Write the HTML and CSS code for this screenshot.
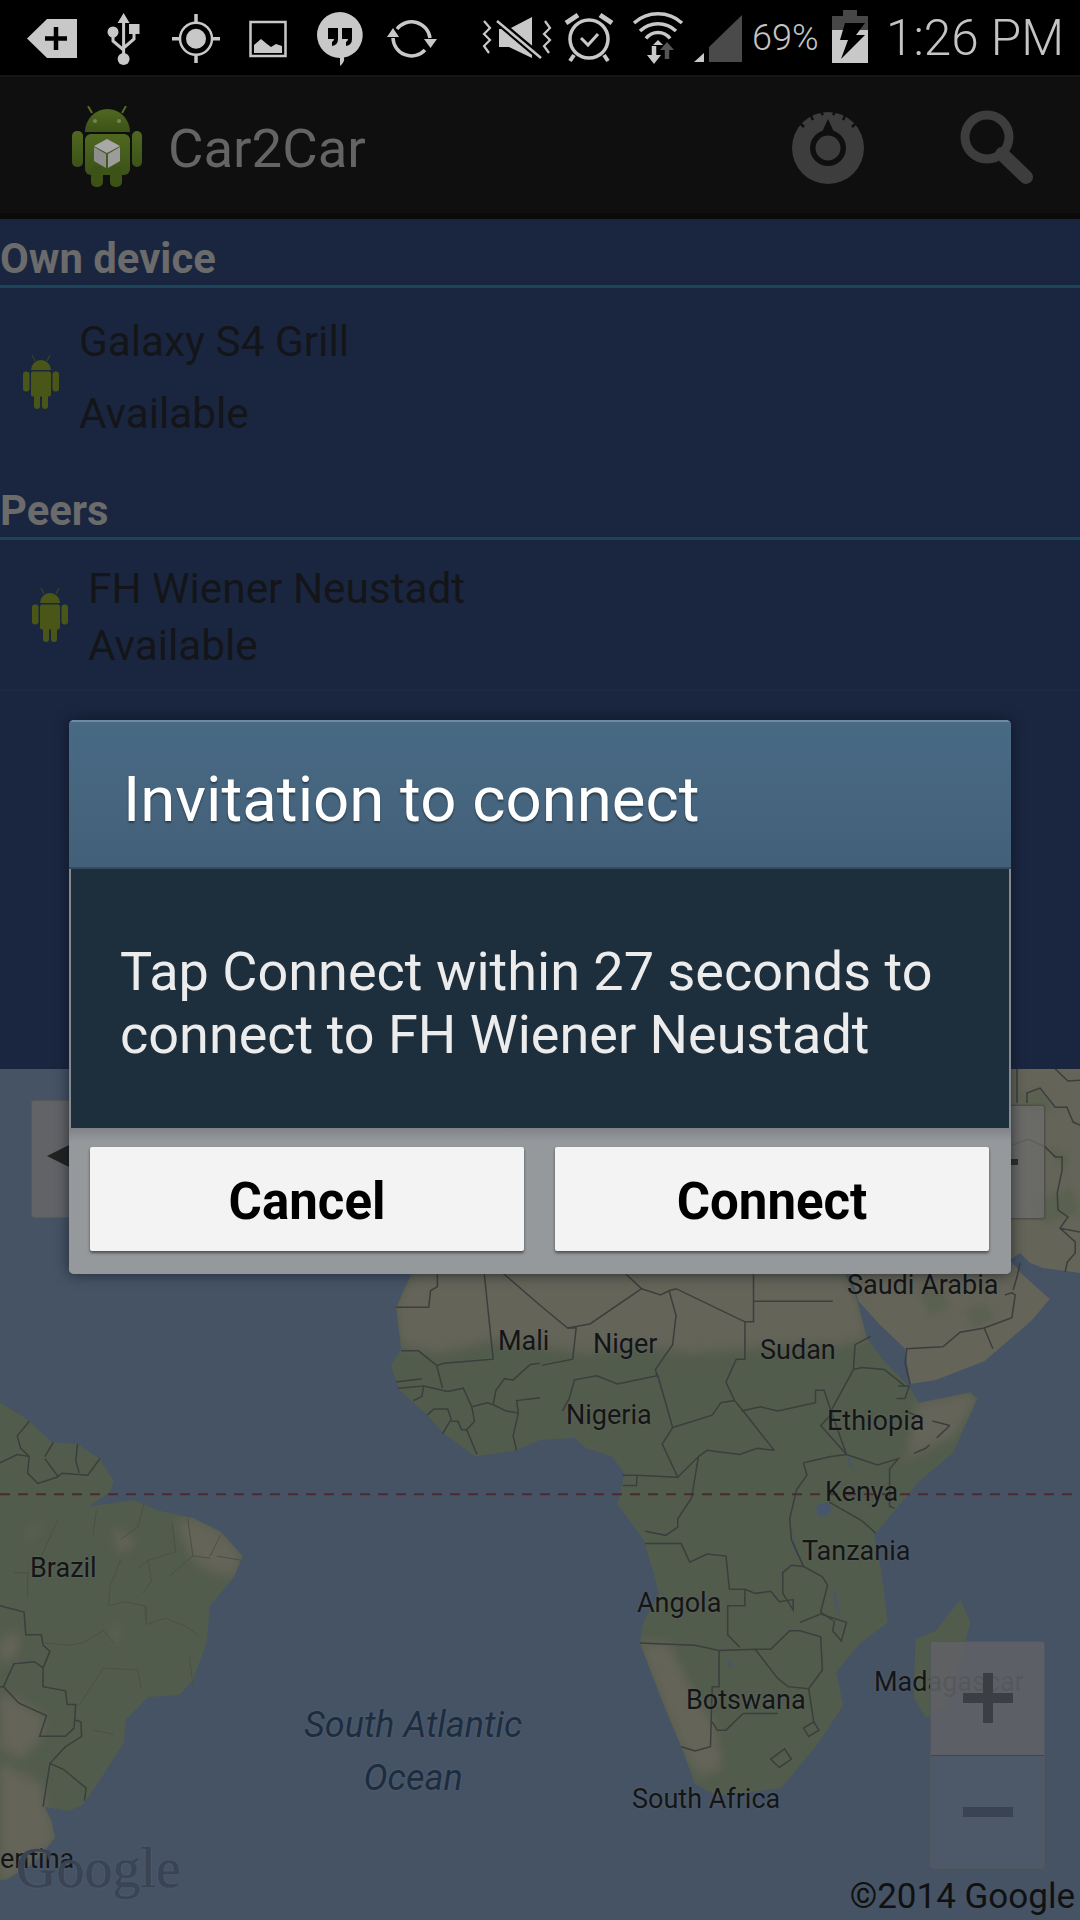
FILE: index.html
```html
<!DOCTYPE html>
<html>
<head>
    <meta charset="utf-8">
    <meta name="viewport" content="width=device-width, initial-scale=1">
    <title>Car2Car</title>
    <link rel="stylesheet" href="styles.css">
</head>
<body>
<div class="phone">
    <svg class="defs" width="0" height="0">
        <symbol id="droid" viewBox="0 0 36 56">
            <path d="M8 17a10 10 0 0 1 20 0z"/>
            <path d="M12 8L9 2M24 8l3-6" stroke="#3f4c18" stroke-width="1"/>
            <rect x="8" y="18.500" width="20" height="25" rx="2"/>
            <rect x="0" y="18.500" width="6.500" height="20" rx="3"/>
            <rect x="29.500" y="18.500" width="6.500" height="20" rx="3"/>
            <rect x="11" y="40" width="6" height="16" rx="3"/>
            <rect x="19" y="40" width="6" height="16" rx="3"/>
        </symbol>
    </svg>

    <div class="status">
        <svg class="notify" width="745" height="75" viewBox="0 0 745 75">
            <!-- add tag -->
            <path class="i" d="M27 38.500L47 19h30v39H47z"/>
            <path d="M45 38.500h22M56 27v23" stroke="#000" stroke-width="4.500" fill="none"/>
            <!-- usb -->
            <path class="i" d="M123.600 13l6 10h-12z"/>
            <path d="M123.600 20v38M113 34v7l10.600 9M134 32v7l-10.400 9" stroke="#c8c8c8" stroke-width="3" fill="none"/>
            <circle class="i" cx="123.600" cy="59" r="6"/>
            <circle class="i" cx="113" cy="32" r="5.500"/>
            <rect class="i" x="129" y="24" width="10.500" height="10"/>
            <!-- location -->
            <circle cx="196" cy="38.700" r="16" fill="none" stroke="#c8c8c8" stroke-width="2.500"/>
            <circle class="i" cx="196" cy="38.700" r="10"/>
            <path d="M196 14v9M196 54v9M172 38.700h9M211 38.700h9" stroke="#c8c8c8" stroke-width="3.500"/>
            <!-- picture -->
            <rect x="250.500" y="22" width="35" height="34" fill="none" stroke="#c8c8c8" stroke-width="2.500"/>
            <path class="i" d="M254 53V45l7-6 6 5 4 3 5-3 6 2v7z"/>
            <!-- hangouts -->
            <path class="i" d="M340 12a23 23 0 0 1 4 45.600Q345 62 340 66V58a23 23 0 0 1 0-46z"/>
            <path d="M328 28h10v11q0 6-6 7v-4q2-1 2-3h-6zM342 28h10v11q0 6-6 7v-4q2-1 2-3h-6z" fill="#000"/>
            <!-- sync -->
            <path d="M397 29A18.500 18.500 0 0 1 430 38M425 50A18.500 18.500 0 0 1 393 38" fill="none" stroke="#c8c8c8" stroke-width="3.500"/>
            <path class="i" d="M387 37h12l-6-9zM424 39h13l-6.500 9z"/>
            <!-- silent vibrate -->
            <path d="M484 21l6 7-6 6 6 6-6 6 5 7M545 21l5 7-6 6 6 6-6 6 5 7" fill="none" stroke="#c8c8c8" stroke-width="2.200"/>
            <path class="i" d="M499 29v18h10l23 11V17l-23 12z"/>
            <path d="M496 20l44 37" stroke="#000" stroke-width="7"/>
            <path d="M497 21l44 37" stroke="#c8c8c8" stroke-width="2.500"/>
            <!-- alarm -->
            <circle cx="589" cy="39" r="19" fill="none" stroke="#c8c8c8" stroke-width="3.500"/>
            <path d="M581 38l7 7 10-11" fill="none" stroke="#c8c8c8" stroke-width="3"/>
            <path d="M566 23l12-8M612 23l-12-8" stroke="#c8c8c8" stroke-width="5"/>
            <path d="M574 55l-4 6M604 55l4 6" stroke="#c8c8c8" stroke-width="4"/>
            <!-- wifi -->
            <path d="M634 23a36 36 0 0 1 48 0M640 31a26 26 0 0 1 36 0M646 38.500a15 15 0 0 1 24 0" fill="none" stroke="#c8c8c8" stroke-width="3.500"/>
            <path class="i" d="M658 40l-5 5h10z"/>
            <path d="M667 59V47" stroke="#555" stroke-width="4.500"/>
            <path d="M660 50l7-8 7 8z" fill="#555"/>
            <path d="M654 46v10" stroke="#c8c8c8" stroke-width="4.500"/>
            <path class="i" d="M647 55h14l-7 9z"/>
            <!-- signal -->
            <path d="M709 62V47l33-32v47z" fill="#4a4a4a"/>
            <path class="i" d="M694 62l10-9v9z"/>
        </svg>
        <span class="pct">69%</span>
        <svg class="batt" width="36" height="53" viewBox="0 0 36 53">
            <path d="M11 0h14v6h11v15H0V6h11z" fill="#474747"/>
            <rect y="20" width="36" height="33" fill="#c8c8c8"/>
            <path d="M13 13h20l-9 12h9L9 49l7-19H8z" fill="#000"/>
        </svg>
        <span class="clock">1:26 PM</span>
    </div>

    <div class="appbar">
        <svg class="logo" width="70" height="81" viewBox="0 0 70 81">
            <defs>
                <linearGradient id="leaf" x1="0" y1="0" x2="0" y2="1">
                    <stop offset="0" stop-color="#4f6820"/>
                    <stop offset="1" stop-color="#3c5217"/>
                </linearGradient>
            </defs>
            <path d="M20 7L16 0M50 7l4-7" stroke="#55692b" stroke-width="2"/>
            <path d="M13 26a22.500 23 0 0 1 45 0z" fill="url(#leaf)"/>
            <circle cx="23" cy="15" r="2" fill="#74835a"/>
            <circle cx="47" cy="15" r="2" fill="#74835a"/>
            <rect x="13" y="28" width="45" height="41" rx="6" fill="url(#leaf)"/>
            <rect x="0" y="25" width="11" height="36" rx="5" fill="url(#leaf)"/>
            <rect x="60" y="25" width="10" height="36" rx="5" fill="url(#leaf)"/>
            <rect x="19" y="60" width="12" height="21" rx="5" fill="#3c5217"/>
            <rect x="38" y="60" width="12" height="21" rx="5" fill="#3c5217"/>
            <path d="M35 33l13 7-13 7-13-7z" fill="#a8a8a8"/>
            <path d="M22 41l12 7v14l-12-7z" fill="#8e8e8e"/>
            <path d="M48 41l-12 7v14l12-7z" fill="#9c9c9c"/>
        </svg>
        <span class="app-title">Car2Car</span>
        <svg class="action gear" width="74" height="74" viewBox="0 0 74 74">
            <circle cx="37" cy="38" r="36" fill="#3d3d3d"/>
            <path d="M30 2l2 3M44 2l-2 3M20 6l2 4M54 6l-2 4M10 14l3 3M64 14l-3 3" stroke="#0f0f0f" stroke-width="2.500"/>
            <circle cx="37" cy="38" r="18" fill="#0f0f0f"/>
            <path d="M37 9l6 13H31z" fill="#0f0f0f"/>
            <circle cx="37" cy="38" r="12.500" fill="#3d3d3d"/>
        </svg>
        <svg class="action search" width="74" height="76" viewBox="0 0 74 76">
            <circle cx="27" cy="27" r="22" fill="none" stroke="#3d3d3d" stroke-width="9"/>
            <path d="M42 44l24 23" stroke="#3d3d3d" stroke-width="14" stroke-linecap="round"/>
        </svg>
    </div>

    <div class="lists">
        <div class="group-head group-own">Own device</div>
        <div class="peer peer-own">
            <svg class="droid"><use href="#droid"/></svg>
            <div class="peer-text">
                <div>Galaxy S4 Grill</div>
                <div>Available</div>
            </div>
        </div>
        <div class="group-head">Peers</div>
        <div class="peer peer-far">
            <svg class="droid"><use href="#droid"/></svg>
            <div class="peer-text">
                <div>FH Wiener Neustadt</div>
                <div>Available</div>
            </div>
        </div>
    </div>

    <div class="map">
        <svg class="land" viewBox="0 -485 3136 2053" preserveAspectRatio="none">
            <defs>
                <path id="south-am" d="M0 320L60 350 85 365 150 415 225 420 290 455 330 510 320 535 260 570 390 555 460 580 560 598 640 630 705 690 680 740 610 810 600 900 560 990 520 1025 430 1030 365 1085 360 1140 290 1230 240 1290 200 1305 130 1295 150 1330 160 1370 100 1430 20 1470 0 1472z"/>
                <path id="africa" d="M1200 0L1150 90 1165 190 1135 230 1160 290 1240 350 1290 395 1380 450 1500 435 1568 410 1668 405 1703 430 1778 450 1813 490 1793 565 1868 650 1898 730 1913 780 1868 850 1858 900 1918 1030 1978 1150 2018 1240 2088 1270 2268 1250 2378 1140 2448 1050 2428 970 2498 900 2578 850 2558 720 2538 640 2668 510 2768 440 2838 310 2818 295 2668 320 2638 280 2568 220 2518 165 2488 70 2448 0z"/>
                <path id="arabia" d="M2468 0L2493 75 2553 130 2628 190 2643 275 2718 265 2858 220 2998 120 3048 70 2968 10 2933 -24 2904 -24 2904 0z"/>
                <path id="iran" d="M2904 -485H3136V7L3029 -5 2991 -17 2962 -41 2933 -24H2904z"/>
                <clipPath id="coast">
                    <use href="#south-am"/>
                    <use href="#africa"/>
                    <use href="#arabia"/>
                    <use href="#iran"/>
                </clipPath>
            </defs>
            <use class="green" href="#south-am"/>
            <use class="green" href="#africa"/>
            <use class="tan-flat" href="#arabia"/>
            <use class="tan-flat" href="#iran"/>
            <path class="green" d="M2788 795L2818 850 2793 930 2748 1050 2688 1080 2653 1030 2658 890 2718 870z"/>

            <g clip-path="url(#coast)">
                <g class="sand">
                    <path d="M510 610L560 598 640 630 705 690 680 740 620 730 560 700z"/>
                    <path d="M0 1190L120 1240 130 1295 150 1330 160 1370 100 1430 20 1470 0 1472z"/>
                    <path d="M60 1040L130 1080 120 1130 60 1180 0 1150 0 1020z"/>
                    <path d="M60 650L130 600 100 640zM320 880L350 850 340 900zM330 620L400 660 340 680zM0 890L60 870 50 930 0 950z"/>
                    <path d="M1200 0L1150 90 1165 180 1270 200 1430 170 1560 180 1700 200 1850 180 2000 200 2160 190 2300 180 2440 180 2518 165 2488 70 2448 0z"/>
                    <path d="M2600 470L2668 440 2770 400 2838 310 2818 295 2668 320 2650 350 2640 440z"/>
                    <path d="M1858 900L1918 1030 1978 1150 2030 1220 2100 1200 2070 1090 2000 1000 1940 900z"/>
                </g>
                <g class="moss">
                    <path d="M2960 -420l60 -20 40 50 -60 10zM3040 -300l70 30 -20 30zM2990 -160l120 -40 26 60 -100 30z"/>
                    <path d="M2660 40l60 -10 40 60 -60 20zM2800 100l60 -20 30 40 -60 20z"/>
                </g>
            </g>
            <path class="lake" d="M2370 570q20-10 40-6 8 18-10 30h-26zM2460 440l14 34 10 10-20-14zM2420 760l14 50 8 30-18-30z"/>
            <path class="lake" d="M2300 620l12 50 20 40-24-30zM2110 940l20 10-10 10zM1900 240l20 20-14 0z"/>

            <g class="border">
                <path d="M1150 90H1245L1250 50 1270 40V0M1405 0L1432 215 1290 225 1268 230 1215 195 1165 195M1450 0L1568 85 1648 140 1713 130 1863 45 1818 10M1268 230L1285 285M1150 270L1225 262M1155 285L1230 280 1225 305 1200 315M1230 280L1300 293 1345 285 1370 330 1378 365 1355 385 1385 445M1240 350L1260 335 1300 335 1310 360 1285 395M1310 365H1330L1340 385H1355M1370 330L1415 320 1432 325 1470 340 1505 345 1490 400 1500 435M1432 325L1440 290 1465 262 1490 265 1540 228 1568 225M1505 345L1500 315 1568 308"/>
                <path d="M1648 140H1673L1663 215 1573 230M1863 45L1918 60 1943 50 1963 45 2163 125H2188V10M2188 75H2418M1943 50L1963 110 1953 180 1903 240 1908 255 1793 275 1733 255 1668 265 1653 310 1633 340M2163 125V215H2138L2108 270 2133 315 2093 320 2068 350 1953 380 1933 320 1908 250M1953 380L1923 420 1968 500 2028 450 2008 550 1968 600V620L1933 640 1873 630M2133 315L2158 340 2248 435M2153 340L2208 330 2258 340 2368 320V290H2393L2413 340 2458 445M1968 500L1848 495H1808M1808 520H1848L1850 495M2413 340L2478 240 2483 180 2528 160M2478 240L2503 235 2568 240 2628 280M2458 445L2548 470 2608 455 2583 480V570L2598 575M2248 435L2198 430 2148 445 2053 435 2028 450M2333 465L2413 450 2458 445M2333 465L2343 495 2313 530 2303 565 2293 600 2298 650 2333 715 2388 740 2403 760 2383 825 2418 845M2408 560L2503 605 2543 635"/>
                <path d="M1873 660H1978L2003 705 2053 685 2108 690 2118 770H2163V810H2113V880L2148 910M2163 770L2193 780 2238 775 2263 800 2303 795V820L2273 780V730L2298 712 2333 715M1858 900L2018 905 2088 918 2193 915 2238 915 2293 870H2323L2383 885 2388 965 2348 1010 2288 1005 2258 985 2193 915M2323 850L2383 830 2458 850 2443 895 2418 870 2423 845M2088 918V1005H2068L2063 1150 2018 1160 1978 1150M2068 1090L2083 1110H2108L2158 1070H2258M2348 1010L2363 1090 2378 1110 2348 1125 2333 1105 2363 1090M2238 1180L2278 1155 2298 1180 2263 1200z"/>
                <path d="M2630 190L2738 185 2788 150 2858 140 2938 115 2948 60 2938 55 2918 60M2858 140L2883 190M2633 190L2628 225 2643 275M2608 280H2640L2628 310H2603M2418 345L2383 375 2458 445"/>
                <path stroke-dasharray="18 10" d="M2758 375L2688 360 2628 340M2758 375L2688 430 2633 450"/>
                <path d="M0 465L50 445 85 450 80 490 110 515 165 500 180 490 255 495 290 455M85 365L50 400 60 430 85 450M130 450L155 415M130 455L170 500M225 420L220 460 230 490M0 810L70 825 75 880H120L125 905 145 920 125 960V1005L190 1015 195 1048H220L215 1105 190 1125H115L135 1075 55 1045 10 1005 40 950 100 945 125 960M215 1085L235 1090 237 1125 190 1150 145 1190 125 1295M145 1190L185 1205 250 1250 245 1280M0 1005H10"/>
                <path d="M2953 -485V-403M3064 -485L3101 -456 3136 -458M2982 -403V-427L3020 -439 3064 -393H3098L3116 -357 3136 -350M2939 -301L2985 -316 3035 -297 3064 -273H3084V-241L3070 -186 3072 -145 3101 -128 3078 -101 3136 -92M3078 -101L3122 -68V-41L3099 -19 3093 5M2962 -17L2953 17 2942 48"/>
            </g>
            <g class="state">
                <path d="M170 600L120 690M280 580L270 640M420 560L400 620 350 650M500 610L510 680 430 700 400 720M545 600L560 690 610 695M640 640L610 690M700 700L630 690M560 690L490 740M430 700L440 750 415 780M350 700L320 760 315 810M320 810L360 800 420 810 425 855 480 840 540 860 575 880M425 810V855M240 900L300 870 330 900M300 960L400 965 410 1010M230 1050L300 960M130 900L200 905 240 900M40 730H80V790M560 1000L550 930M270 1110L330 1120"/>
            </g>
            <path class="equator" d="M0 541H3136"/>
        </svg>

        <span class="ctrl ctrl-nav"><i class="nav-arrow"></i></span>
        <span class="ctrl ctrl-tools"><i class="tool-dash"></i></span>

        <span class="place p-saudi">Saudi Arabia</span>
        <span class="place p-mali">Mali</span>
        <span class="place p-niger">Niger</span>
        <span class="place p-sudan">Sudan</span>
        <span class="place p-nigeria">Nigeria</span>
        <span class="place p-ethiopia">Ethiopia</span>
        <span class="place p-kenya">Kenya</span>
        <span class="place p-tanzania">Tanzania</span>
        <span class="place p-angola">Angola</span>
        <span class="place p-botswana">Botswana</span>
        <span class="place p-madagascar">Madagascar</span>
        <span class="place p-safrica">South Africa</span>
        <span class="place p-brazil">Brazil</span>
        <span class="place p-argentina">entina</span>
        <span class="sea p-atlantic">South Atlantic<br>Ocean</span>
        <span class="wordmark">Google</span>
        <span class="copyright">©2014 Google</span>

        <div class="zoomer">
            <div class="zoom-btn zoom-in"><i class="bar-h"></i><i class="bar-v"></i></div>
            <div class="zoom-btn zoom-out"><i class="bar-h"></i></div>
        </div>
    </div>

    <div class="dialog">
        <div class="dialog-title">Invitation to connect</div>
        <div class="dialog-body">Tap Connect within 27 seconds to connect to FH Wiener Neustadt</div>
        <div class="dialog-foot">
            <button class="btn">Cancel</button>
            <button class="btn">Connect</button>
        </div>
    </div>
</div>
</body>
</html>
```

FILE: styles.css
```css
html, body {
  margin: 0;
  padding: 0;
  background: #000;
}
body {
  font-family: Roboto, "Liberation Sans", sans-serif;
}
.phone {
  position: relative;
  width: 1080px;
  height: 1920px;
  overflow: hidden;
  display: flex;
  flex-direction: column;
}
.defs {
  position: absolute;
}

/* status bar */
.status {
  flex: 0 0 75px;
  display: flex;
  align-items: center;
  background: #000;
  color: #c4c4c4;
  font-weight: 300;
}
.notify {
  flex: none;
}
.i {
  fill: #c8c8c8;
}
.pct {
  font-size: 36px;
  margin-left: 7px;
  width: 80px;
}
.batt {
  flex: none;
  margin-top: -2px;
}
.clock {
  font-size: 49.500px;
  margin-left: 18px;
  white-space: nowrap;
}

/* action bar */
.appbar {
  flex: 0 0 138px;
  display: flex;
  align-items: center;
  background: #0f0f0f;
  border-top: 2px solid #161616;
  box-sizing: border-box;
  padding: 6px 0 0 72px;
}
.logo {
  flex: none;
  margin-top: -4px;
}
.app-title {
  margin-left: 26px;
  font-size: 54.500px;
  color: #646464;
  width: 623px;
}
.action {
  flex: none;
}
.gear {
  margin-right: 95px;
  margin-top: -2px;
}

/* peer lists */
.lists {
  flex: 0 0 856px;
  background: #1a2640;
  border-top: 6px solid #0a0a0a;
  box-sizing: border-box;
}
.group-head {
  height: 66px;
  box-sizing: border-box;
  border-bottom: 3px solid #1b4559;
  padding-top: 6px;
  font-size: 41.800px;
  font-weight: 700;
  line-height: 62px;
  color: #6b6b6b;
}
.group-own {
  height: 69px;
  padding-top: 8px;
  line-height: 64px;
}
.peer {
  display: flex;
  align-items: center;
  color: #141518;
  font-size: 42.300px;
}
.peer-own {
  height: 186px;
  padding-left: 23px;
}
.peer-own .peer-text {
  line-height: 72px;
  margin-bottom: 6px;
}
.peer-far {
  height: 150px;
  padding-left: 32px;
  border-bottom: 1px solid #1c2a44;
}
.peer-far .peer-text {
  line-height: 57px;
  margin-top: 3px;
}
.peer-far .droid {
  margin-top: -2px;
}
.droid {
  flex: none;
  width: 36px;
  height: 56px;
  fill: #4a5618;
  margin-right: 20px;
}

/* map */
.map {
  position: relative;
  flex: 1;
  background: #455365;
  overflow: hidden;
}
.land {
  position: absolute;
  left: 0;
  top: 0;
  width: 1080px;
  height: 851px;
}
.green {
  fill: #525c4c;
}
.tan-flat {
  fill: #656459;
}
.sand {
  fill: #656459;
  filter: blur(14px);
}
.moss {
  fill: #5a6150;
  filter: blur(8px);
}
.lake {
  fill: #47566c;
}
.border path {
  fill: none;
  stroke: #3b3e3c;
  stroke-width: 1.500px;
  vector-effect: non-scaling-stroke;
}
.state path {
  fill: none;
  stroke: #4a5046;
  stroke-width: 1px;
  vector-effect: non-scaling-stroke;
}
.equator {
  stroke: #4d2a30;
  stroke-width: 2px;
  stroke-dasharray: 10 8;
  vector-effect: non-scaling-stroke;
}
.place {
  position: absolute;
  font-size: 27px;
  line-height: 32px;
  color: #141517;
  white-space: nowrap;
  text-shadow: 0 0 3px rgba(112, 112, 112, 0.55);
  transform: translateY(-50%);
}
.p-saudi { left: 847px; top: 216px; }
.p-mali { left: 498px; top: 272px; }
.p-niger { left: 593px; top: 275px; }
.p-sudan { left: 760px; top: 281px; }
.p-nigeria { left: 566px; top: 346px; }
.p-ethiopia { left: 827px; top: 352px; }
.p-kenya { left: 825px; top: 423px; }
.p-tanzania { left: 802px; top: 482px; }
.p-angola { left: 637px; top: 534px; }
.p-botswana { left: 686px; top: 631px; }
.p-madagascar { left: 874px; top: 613px; }
.p-safrica { left: 632px; top: 730px; }
.p-brazil { left: 30px; top: 499px; }
.p-argentina { left: 0; top: 790px; }
.sea {
  position: absolute;
  text-align: center;
  font-style: italic;
  font-size: 36px;
  line-height: 53px;
  color: #1e2c40;
  text-shadow: 0 0 3px rgba(100, 112, 128, 0.6);
}
.p-atlantic {
  left: 304px;
  top: 630px;
}
.wordmark {
  position: absolute;
  left: 16px;
  top: 766px;
  font-family: "Liberation Serif", serif;
  font-size: 56px;
  line-height: 66px;
  color: #3a4453;
  -webkit-text-stroke: 0.6px #3a4453;
  text-shadow: 0 0 2px rgba(116, 126, 140, 0.7);
}
.copyright {
  position: absolute;
  right: 5px;
  top: 808px;
  font-size: 35px;
  line-height: 40px;
  color: #111;
  white-space: nowrap;
}
.ctrl {
  position: absolute;
  box-sizing: border-box;
  border: 1px solid #55585c;
  border-radius: 3px;
}
.ctrl-nav {
  left: 31px;
  top: 31px;
  width: 120px;
  height: 118px;
  background: #616367;
}
.nav-arrow {
  position: absolute;
  left: 15px;
  top: 43px;
  border: 12px solid transparent;
  border-right: 24px solid #222;
  border-left: 0;
}
.ctrl-tools {
  left: 930px;
  top: 36px;
  width: 115px;
  height: 114px;
  background: rgba(108, 108, 108, 0.72);
  border-color: #4e4f4b;
  box-shadow: 0 0 2px rgba(50, 50, 45, 0.6);
}
.tool-dash {
  position: absolute;
  left: 80px;
  top: 53px;
  width: 7px;
  height: 6px;
  background: #2e2e2e;
}
.zoomer {
  position: absolute;
  left: 930px;
  top: 572px;
  width: 115px;
  height: 228px;
  box-sizing: border-box;
  border: 1px solid #52565d;
  border-radius: 3px;
  display: flex;
  flex-direction: column;
}
.zoom-btn {
  position: relative;
  flex: 1;
  display: flex;
  align-items: center;
  justify-content: center;
}
.zoom-in {
  background: rgba(96, 97, 101, 0.88);
  border-bottom: 1px solid #3f4650;
}
.zoom-out {
  background: rgba(84, 94, 108, 0.6);
}
.bar-h {
  display: block;
  width: 50px;
  height: 10px;
  background: #3b3e42;
}
.zoom-out .bar-h {
  background: #3a4352;
}
.bar-v {
  position: absolute;
  width: 10px;
  height: 50px;
  background: #3b3e42;
}

/* dialog */
.dialog {
  position: absolute;
  left: 69px;
  top: 720px;
  width: 942px;
  height: 554px;
  border-radius: 5px;
  display: flex;
  flex-direction: column;
  overflow: hidden;
  box-shadow: 0 0 14px rgba(10, 15, 25, 0.65);
  background: #858a8e;
}
.dialog-title {
  flex: 0 0 149px;
  box-sizing: border-box;
  padding: 14px 0 0 54px;
  background: linear-gradient(#486a85, #446079);
  border-top: 2px solid #6e8ba3;
  border-bottom: 2px solid #354b5e;
  font-size: 63.500px;
  line-height: 128px;
  color: #fff;
  text-shadow: 0 2px 2px rgba(0, 0, 0, 0.4);
}
.dialog-body {
  flex: 0 0 259px;
  box-sizing: border-box;
  margin: 0 2px;
  padding: 71px 30px 0 49px;
  background: #1d2e3c;
  font-size: 54px;
  line-height: 63px;
  color: #ececec;
}
.dialog-foot {
  flex: 1;
  display: flex;
  gap: 31px;
  padding: 19px 22px 0 21px;
  background: linear-gradient(#7f8388, #96999c 14px);
}
.btn {
  flex: 1;
  height: 104px;
  border: 0;
  padding: 4px 0 0;
  border-radius: 2px;
  background: #f3f3f3;
  box-shadow: 0 2px 3px rgba(0, 0, 0, 0.5);
  font-family: inherit;
  font-size: 51px;
  font-weight: 700;
  color: #000;
}
```
